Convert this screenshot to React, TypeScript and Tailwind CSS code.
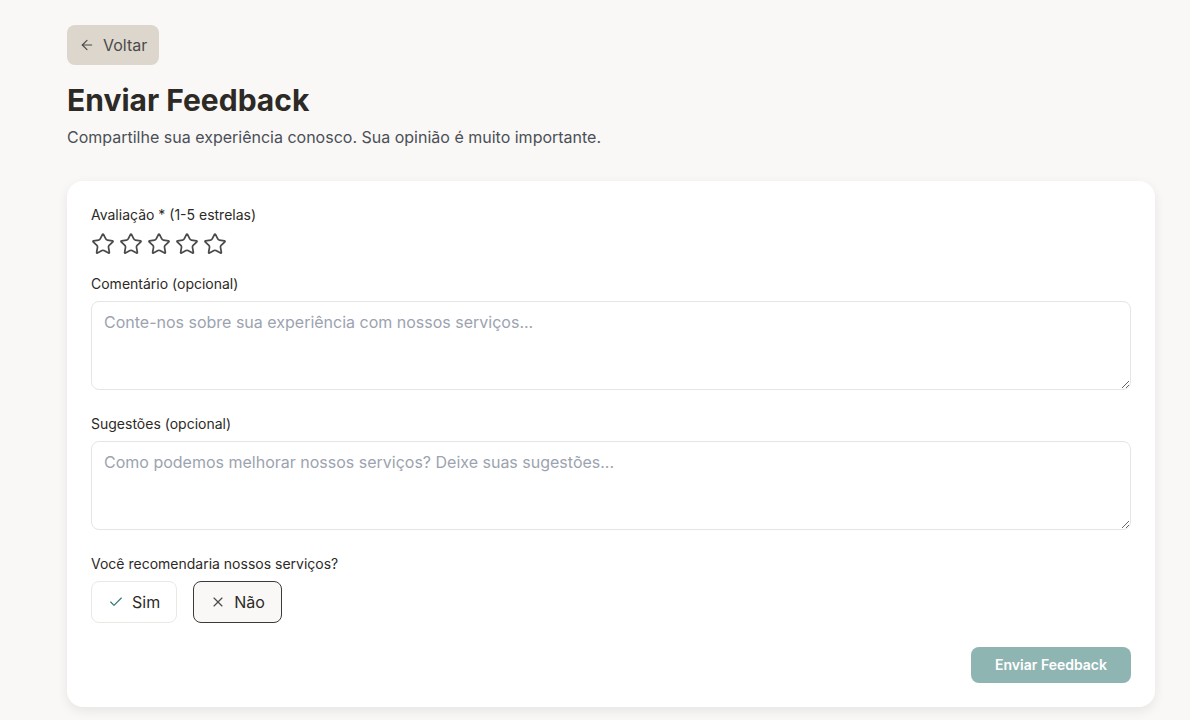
import { ArrowLeft, Star, Check, X } from 'lucide-react';

const font = { fontFamily: 'Inter, "Noto Sans", sans-serif' };

export default function App() {
  return (
    <div style={font} className="min-h-screen bg-[#f9f8f6] pl-[67px] pr-[35px] pt-[25px] pb-6 text-[#2d2a26]">
      <button className="flex h-10 items-center gap-2 rounded-lg bg-[#ddd6cc] px-3 text-base text-[#4a4a4a]">
        <ArrowLeft className="h-4 w-4" strokeWidth={1.75} />
        Voltar
      </button>

      <h1 className="mt-[17px] text-[30px] font-bold leading-9 text-[#2d2a26]">Enviar Feedback</h1>
      <p className="mt-[7px] text-base text-[#4b4f57]">
        Compartilhe sua experiência conosco. Sua opinião é muito importante.
      </p>

      <div className="mt-[32px] rounded-2xl bg-white p-6 shadow-[0_4px_12px_rgba(0,0,0,0.08)]">
        <label className="block text-sm text-[#2d2a26]">Avaliação * (1-5 estrelas)</label>
        <div className="mt-[7px] flex gap-1">
          {[0, 1, 2, 3, 4].map((i) => (
            <Star key={i} className="h-6 w-6 text-[#4a4a4a]" strokeWidth={1.75} />
          ))}
        </div>

        <label className="mt-[18px] block text-sm text-[#2d2a26]">Comentário (opcional)</label>
        <textarea
          rows={3}
          placeholder="Conte-nos sobre sua experiência com nossos serviços..."
          className="mt-[7px] block h-[89px] w-full rounded-lg border border-[#e5e5e5] px-3 py-2 text-base placeholder:text-[#9ca3af] focus:outline-none"
        />

        <label className="mt-6 block text-sm text-[#2d2a26]">Sugestões (opcional)</label>
        <textarea
          rows={3}
          placeholder="Como podemos melhorar nossos serviços? Deixe suas sugestões..."
          className="mt-[7px] block h-[89px] w-full rounded-lg border border-[#e5e5e5] px-3 py-2 text-base placeholder:text-[#9ca3af] focus:outline-none"
        />

        <label className="mt-6 block text-sm text-[#2d2a26]">Você recomendaria nossos serviços?</label>
        <div className="mt-[7px] flex gap-4">
          <button className="flex h-[42px] items-center gap-2 rounded-lg border border-[#ebe8e4] bg-white px-4 text-base text-[#2d2a26]">
            <Check className="h-4 w-4 text-[#2f7a74]" strokeWidth={1.75} />
            Sim
          </button>
          <button className="flex h-[42px] items-center gap-2 rounded-lg border border-[#3a3a3a] bg-[#f9f8f6] px-4 text-base text-[#2d2a26]">
            <X className="h-4 w-4 text-[#4a4a4a]" strokeWidth={1.75} />
            Não
          </button>
        </div>

        <div className="mt-6 flex justify-end">
          <button className="h-9 rounded-lg bg-[#8fb5b3] px-6 text-sm font-semibold text-white">
            Enviar Feedback
          </button>
        </div>
      </div>
    </div>
  );
}
